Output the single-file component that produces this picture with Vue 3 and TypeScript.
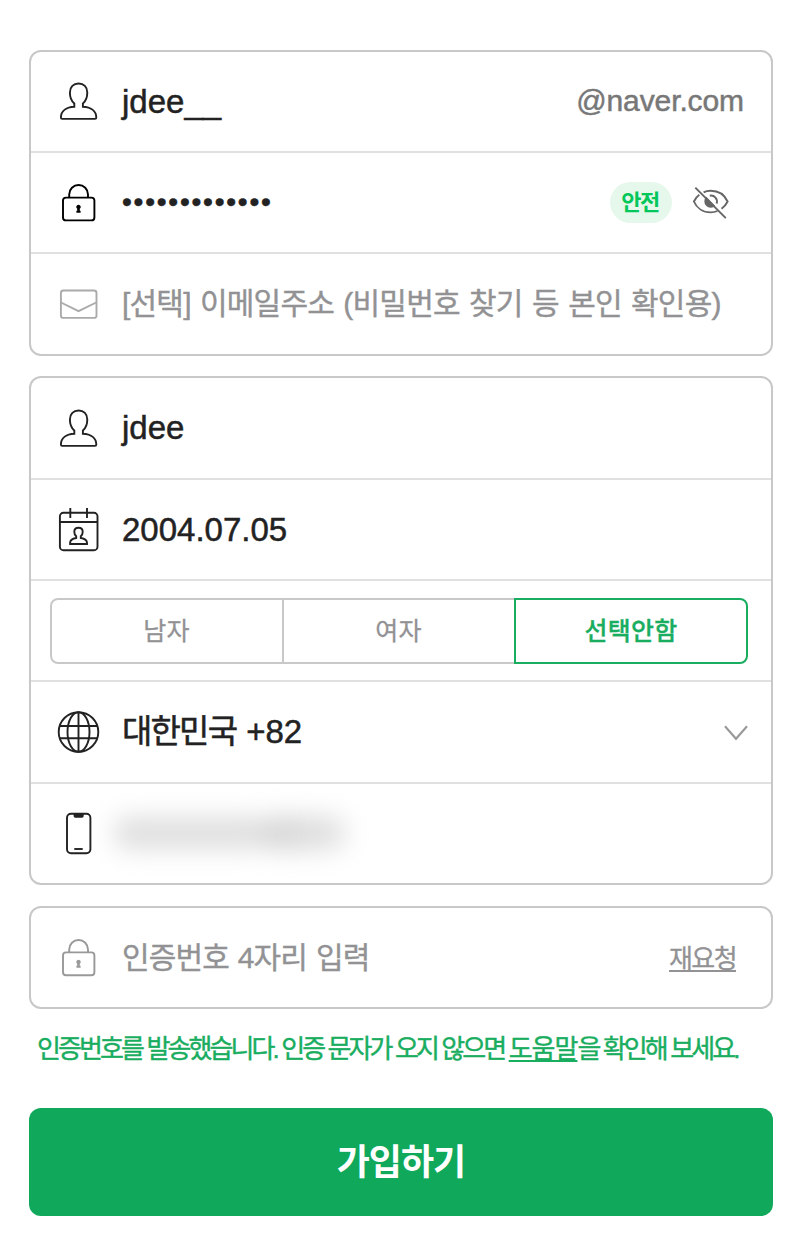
<script setup lang="ts">
import { ref } from 'vue'

const genders = ['남자', '여자', '선택안함']
const gender = ref('선택안함')
const bullets = '•'.repeat(13)
const userPath =
  'M18.3 27.5C15.5 25 13.9 20.8 13.9 16.4C13.9 11 17.500 7.500 22.600 7.500S31.300 11 31.300 16.400C31.300 20.800 29.700 25 26.900 27.500V30.800C34.500 31.200 40.300 34.600 40.300 41.600Q40.300 42.900 39 42.900H6.200Q4.900 42.900 4.900 41.600C4.900 34.600 10.700 31.200 18.300 30.800Z'
</script>

<template>
  <main class="page">
    <section class="box">
      <div class="row">
        <svg class="icon" viewBox="0 0 44 51"><path :d="userPath" /></svg>
        <span class="value">jdee__</span>
        <span class="domain">@naver.com</span>
      </div>
      <div class="row">
        <svg class="icon black" viewBox="0 0 44 51">
          <rect x="7" y="20.6" width="31.4" height="22.8" rx="3" />
          <path d="M13.2 20.6V17.4a9.4 9.4 0 0 1 18.8 0V20.6" />
          <path class="solid" d="M22.5 27.700a2.200 2.200 0 0 1 1.300 4V33.800h.8v1.900h-4.200v-1.900h.8V31.700a2.200 2.200 0 0 1 1.300-4z" />
        </svg>
        <span class="value dots">{{ bullets }}</span>
        <span class="badge"><span class="badge-text">안전</span></span>
        <svg class="eye" viewBox="0 0 40 36">
          <path d="M11.600 7.300C13.700 6.200 16.200 5.800 18.700 5.800C26.500 5.800 32.500 9.800 35.600 16.500C34.300 19.300 32.300 21.700 29.500 23.700M25.500 26C23.400 26.900 21 27.400 18.700 27.400C10.800 27.400 4.600 22.800 1.900 16.500C3.100 13.900 4.700 11.600 7.300 9.700" />
          <path d="M17.800 10.700A6 6 0 0 1 24.600 18.600" />
          <path class="pupil" d="M14.300 11.700A6.300 6.300 0 1 0 23.300 21Z" />
          <path d="M3.300 2.600L33.800 33.200" />
        </svg>
      </div>
      <div class="row tall">
        <svg class="icon mail" viewBox="0 0 44 51">
          <rect x="4.900" y="11.500" width="35.600" height="27.400" rx="2.500" />
          <path d="M5 23.500L22.500 32.200L40.200 23.500" />
        </svg>
        <span class="placeholder email">[선택] 이메일주소 (비밀번호 찾기 등 본인 확인용)</span>
      </div>
    </section>

    <section class="box second">
      <div class="row tall">
        <svg class="icon" viewBox="0 0 44 51"><path :d="userPath" /></svg>
        <span class="value">jdee</span>
      </div>
      <div class="row">
        <svg class="icon" viewBox="0 0 44 51">
          <rect x="3.900" y="8.800" width="37.600" height="37.400" rx="3.500" />
          <path d="M3.900 18H41.500M14.300 4V14M31 4V14" />
          <path d="M20.200 32.300C18.700 31 18.300 29 18.300 27.700C18.300 25.300 20 23.700 22.500 23.700S26.700 25.300 26.700 27.700C26.700 29 26.300 31 24.800 32.300V34C28.600 34.700 31 35.800 31 38.800V40H14.100V38.800C14.100 35.800 16.400 34.700 20.200 34Z" />
        </svg>
        <span class="value">2004.07.05</span>
      </div>
      <div class="row">
        <div class="segments">
          <button
            v-for="g in genders"
            :key="g"
            type="button"
            class="segment"
            :class="{ active: g === gender }"
            @click="gender = g"
          >{{ g }}</button>
        </div>
      </div>
      <div class="row tall">
        <svg class="icon globe" viewBox="0 0 44 51">
          <circle cx="22.500" cy="25" r="19.800" />
          <ellipse cx="22.500" cy="25" rx="11" ry="19.800" />
          <path d="M22.500 5.200V44.800M3.600 19H41.400M3.600 31.300H41.400" />
        </svg>
        <span class="value"><span class="country">대한민국</span><span class="code">+82</span></span>
        <svg class="chevron" viewBox="0 0 26 18"><path d="M2 2.200L13 14.800L24 2.200" /></svg>
      </div>
      <div class="row">
        <svg class="icon" viewBox="0 0 44 51">
          <rect x="11" y="5.700" width="23.400" height="39.500" rx="4" />
          <path class="solid" d="M17.600 5.500H27.700V8Q27.700 9.800 26 9.800H19.300Q17.600 9.800 17.600 8Z" />
          <path d="M18.300 41H26.700" />
        </svg>
        <span class="hidden-number"><i class="smudge left"></i><i class="smudge right"></i></span>
      </div>
    </section>

    <section class="box">
      <div class="row">
        <svg class="icon gray" viewBox="0 0 44 51">
          <rect x="7" y="20.400" width="31.400" height="22.800" rx="3" />
          <path d="M13.200 20.400V17.400a9.400 9.400 0 0 1 18.800 0V20.400" />
          <path class="solid" d="M22.500 27.700a2.200 2.200 0 0 1 1.300 4V33.800h.8v1.900h-4.200v-1.900h.8V31.700a2.200 2.200 0 0 1 1.300-4z" />
        </svg>
        <span class="placeholder auth">인증번호 4자리 입력</span>
        <a class="resend">재요청</a>
      </div>
    </section>

    <p class="message">인증번호를 발송했습니다. 인증 문자가 오지 않으면 <a class="help">도움말</a>을 확인해 보세요.</p>

    <button type="button" class="submit">가입하기</button>
  </main>
</template>

<style>
body {
  margin: 0;
  background: #fff;
}
</style>

<style scoped>
.page {
  box-sizing: border-box;
  width: 800px;
  height: 1241px;
  padding: 50px 27px 0 29px;
  font-family: 'Liberation Sans', 'Noto Sans CJK KR', sans-serif;
  color: #222;
  background: #fff;
}
.box {
  box-sizing: border-box;
  border: 2px solid #c8c8c8;
  border-radius: 12px;
}
.second {
  margin: 20px 0 21px;
}
.row {
  display: flex;
  align-items: center;
  height: 99px;
  border-bottom: 2px solid #e0e0e0;
}
.row.tall {
  height: 100px;
}
.row:last-child {
  border-bottom: 0;
}
.icon {
  flex: none;
  align-self: flex-start;
  width: 44px;
  height: 51px;
  margin: 24px 22px 0 25px;
  fill: none;
  stroke: #222;
  stroke-width: 1.9;
}
.tall .icon {
  margin-top: 25px;
}
.icon.black {
  stroke: #000;
}
.icon.mail {
  stroke: #aaa;
}
.icon.gray {
  stroke: #999;
}
.icon .solid {
  fill: #222;
  stroke: none;
}
.icon.black .solid {
  fill: #000;
}
.icon.gray .solid {
  fill: #999;
}
.value {
  font-size: 33px;
  line-height: 40px;
  white-space: nowrap;
  -webkit-text-stroke: 0.5px #222;
}
.value.dots {
  margin: 0 0 2px;
  font-size: 28px;
  letter-spacing: 1.78px;
}
.domain {
  margin: 0 27px 2px auto;
  font-size: 30px;
  letter-spacing: -0.1px;
  color: #777;
  -webkit-text-stroke: 0.5px #777;
}
.badge {
  display: flex;
  align-items: center;
  justify-content: center;
  width: 62px;
  height: 41px;
  margin-left: auto;
  border-radius: 21px;
  background: #e6f8ec;
}
.badge-text {
  margin-right: 2px;
  font-size: 22px;
  font-weight: 700;
  line-height: 30px;
  letter-spacing: -1.5px;
  color: #03c75a;
}
.eye {
  width: 40px;
  height: 36px;
  margin: 0 39px 0 20px;
  fill: none;
  stroke: #666;
  stroke-width: 1.9;
}
.eye .pupil {
  fill: #666;
  stroke: none;
}
.placeholder {
  font-size: 30px;
  line-height: 40px;
  letter-spacing: -0.8px;
  word-spacing: 1.8px;
  color: #929294;
  white-space: nowrap;
  -webkit-text-stroke: 0.4px #929294;
}
.placeholder.auth {
  letter-spacing: -0.85px;
  word-spacing: 1.3px;
}
.segments {
  display: grid;
  grid-template-columns: 234px 230px 234px;
  height: 66px;
  margin-left: 19px;
}
.segment {
  box-sizing: border-box;
  padding: 0 1px 0 0;
  border: 2px solid #c8c8c8;
  border-left-width: 0;
  background: #fff;
  font-family: inherit;
  font-size: 25px;
  line-height: 36px;
  letter-spacing: 0.2px;
  color: #929294;
  -webkit-text-stroke: 0.3px currentColor;
}
.segment:first-child {
  border-left-width: 2px;
  border-radius: 8px 0 0 8px;
}
.segment:nth-child(2) {
  border-right-width: 0;
}
.segment:last-child {
  padding-right: 0;
  border-left-width: 2px;
  border-radius: 0 8px 8px 0;
}
.segment.active {
  border-color: #19ad60;
  color: #19ad60;
  font-weight: 500;
}
.country {
  letter-spacing: -1.8px;
}
.code {
  margin-left: 10px;
}
.chevron {
  width: 26px;
  height: 18px;
  margin: 2px 22px 0 auto;
  fill: none;
  stroke: #999;
  stroke-width: 2.1;
}
.hidden-number {
  display: flex;
  align-items: center;
  width: 260px;
  height: 50px;
  margin: 0 0 2px -9px;
  filter: blur(12px);
}
.smudge {
  width: 156px;
  height: 34px;
  border-radius: 16px;
  background: #e0e0e0;
}
.smudge.right {
  width: 86px;
  height: 36px;
  margin-left: -8px;
  background: linear-gradient(90deg, #d4d4d4, #e6e6e6);
}
.resend {
  margin: 0 35px 3px auto;
  font-size: 26px;
  letter-spacing: -1.6px;
  color: #929294;
  text-decoration: underline;
  text-decoration-thickness: 2px;
  text-underline-offset: 2px;
  -webkit-text-stroke: 0.3px #929294;
}
.message {
  height: 40px;
  margin: 20px 0 0 8px;
  font-size: 26px;
  line-height: 40px;
  letter-spacing: -2.9px;
  color: #19ad60;
  white-space: nowrap;
  -webkit-text-stroke: 0.4px #19ad60;
}
.help {
  letter-spacing: -1px;
  text-decoration: underline;
  text-decoration-thickness: 2px;
  text-underline-offset: 2px;
}
.submit {
  display: block;
  width: 744px;
  height: 108px;
  margin-top: 39px;
  padding: 0 0 6px 0;
  border: 0;
  border-radius: 12px;
  background: #10a95b;
  font-family: inherit;
  font-size: 36px;
  font-weight: 700;
  letter-spacing: -1px;
  color: #fff;
}
</style>
